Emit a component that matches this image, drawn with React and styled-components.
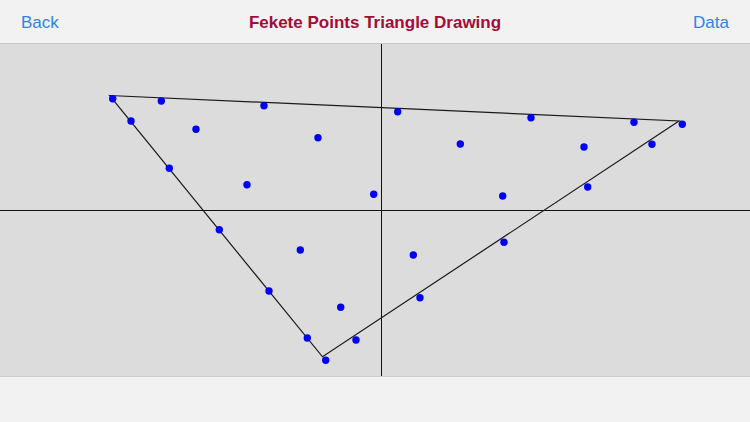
import React from "react";
import styled, { createGlobalStyle } from "styled-components";

const GlobalStyle = createGlobalStyle`
  html, body {
    margin: 0;
    padding: 0;
    background: #f2f2f2;
  }
  * {
    box-sizing: border-box;
  }
`;

const vertices = [
  [109.5, 95.5],
  [679, 121],
  [322.5, 356.8],
];

const dots = [
  [112.7, 98.7], [161.3, 101], [264, 105.7], [131, 121], [196, 129.3],
  [318, 137.7], [169.3, 168.3], [247, 184.7], [373.7, 194.3],
  [397.7, 111.7], [531, 117.7], [634, 122.3], [682.3, 124.3], [460.3, 144],
  [584, 147], [652, 144.3], [587.7, 187], [502.7, 196],
  [219.3, 229.7], [300.3, 250], [413.3, 255], [269, 291], [420, 297.7],
  [340.7, 307.3], [307.3, 338], [356, 340], [325.7, 360.3], [504, 242.3],
];

const App = () => {
  return (
    <Screen>
      <GlobalStyle />
      <NavBar>
        <NavButton>Back</NavButton>
        <Title>Fekete Points Triangle Drawing</Title>
        <NavButton $right>Data</NavButton>
      </NavBar>
      <Canvas>
        <svg width="750" height="332" viewBox="0 44 750 332">
          <line x1="0" y1="210.5" x2="750" y2="210.5" stroke="#111" strokeWidth="1" />
          <line x1="381.5" y1="44" x2="381.5" y2="376" stroke="#111" strokeWidth="1" />
          <polygon
            points={vertices.map((v) => v.join(",")).join(" ")}
            fill="none"
            stroke="#1a1a1a"
            strokeWidth="1.2"
          />
          {dots.map(([x, y], i) => (
            <circle key={i} cx={x} cy={y} r="3.7" fill="#0000f5" />
          ))}
        </svg>
      </Canvas>
      <Footer />
    </Screen>
  );
};

export default App;

const Screen = styled.div`
  width: 750px;
  height: 422px;
  display: flex;
  flex-direction: column;
  overflow: hidden;
  font-family: "Liberation Sans", Arial, sans-serif;
`;

const NavBar = styled.div`
  height: 44px;
  flex-shrink: 0;
  display: grid;
  grid-template-columns: 1fr auto 1fr;
  align-items: center;
  padding: 2px 21px 0 21px;
  background: #f2f2f2;
  border-bottom: 1px solid #c9c9c9;
`;

const NavButton = styled.div`
  font-size: 17px;
  color: #2f83e4;
  justify-self: ${(p) => (p.$right ? "end" : "start")};
`;

const Title = styled.div`
  font-size: 17px;
  font-weight: 700;
  color: #a10d36;
`;

const Canvas = styled.div`
  height: 332px;
  flex-shrink: 0;
  background: #dcdcdc;

  svg {
    display: block;
  }
`;

const Footer = styled.div`
  flex: 1;
  background: #f2f2f2;
  border-top: 1px solid #cdcdcd;
`;
